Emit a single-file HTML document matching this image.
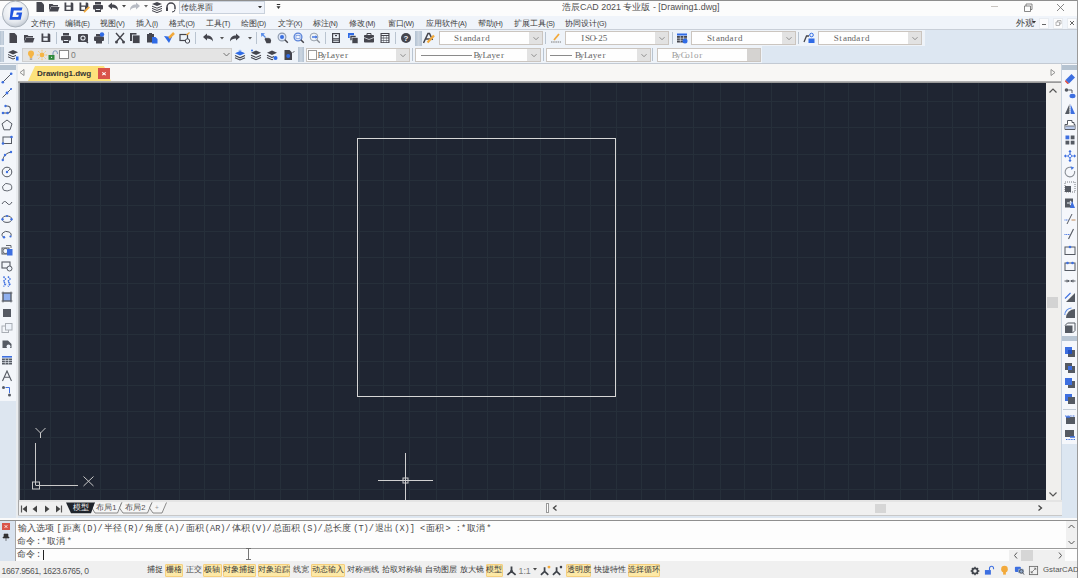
<!DOCTYPE html><html><head><meta charset="utf-8"><style>
*{margin:0;padding:0;box-sizing:border-box}
html,body{width:1078px;height:578px;overflow:hidden;background:#fbfbfb;font-family:"Liberation Sans",sans-serif;position:relative}
.m{font-family:"Liberation Mono",monospace}
.c{display:inline-block;text-align:center;overflow:hidden}
</style></head><body><div style="position:absolute;left:0px;top:0px;width:1078px;height:16px;background:#fcfcfc"></div>
<div style="position:absolute;left:0px;top:0px;width:1078px;height:1px;background:#8e8e8e"></div>
<div style="position:absolute;left:1077px;top:0px;width:1px;height:578px;background:#9a9a9a"></div>
<svg style="position:absolute;left:33.8px;top:0.5px" width="12" height="12" viewBox="0 0 12 12"><path d="M2.5 1 H7.5 L10 3.5 V11 H2.5 Z" fill="#44454d"/></svg>
<svg style="position:absolute;left:48.4px;top:0.5px" width="12" height="12" viewBox="0 0 12 12"><path d="M1 3 H4.5 L5.5 4 H10 V5.5 H3 L1 10 Z" fill="#44454d"/><path d="M3 6 H11.5 L10 10.5 H1.2 Z" fill="#44454d"/></svg>
<svg style="position:absolute;left:63.0px;top:0.5px" width="12" height="12" viewBox="0 0 12 12"><path fill-rule="evenodd" d="M1.5 1.4 H3.3 V4.6 H7.7 V1.4 H9.3 L10.3 2.4 V10 H1.5 Z M3.3 5.8 H7.7 V8.8 H3.3 Z" fill="#44454d"/></svg>
<svg style="position:absolute;left:77.6px;top:0.5px" width="12" height="12" viewBox="0 0 12 12"><path fill-rule="evenodd" d="M1.5 1.4 H3.3 V4.6 H7.7 V1.4 H9.3 L10.3 2.4 V6 L6.5 10 H1.5 Z M3.3 5.8 H7 V8.8 H3.3 Z" fill="#44454d"/><path d="M6 11.2 L11.3 5.8" stroke="#f2a93b" stroke-width="1.8"/></svg>
<svg style="position:absolute;left:92.2px;top:0.5px" width="12" height="12" viewBox="0 0 12 12"><rect x="3" y="1" width="6" height="2.5" fill="#44454d"/><rect x="1" y="4" width="10" height="4.5" rx="1" fill="#44454d"/><rect x="3" y="7.5" width="6" height="3.5" fill="#44454d"/><rect x="3.8" y="8" width="4.4" height="1" fill="#eef3f9"/></svg>
<svg style="position:absolute;left:106.8px;top:0.5px" width="12" height="12" viewBox="0 0 12 12"><path d="M1 5 L5 1.5 V3.6 C8.5 3.6 11 5.5 11 9.5 C9.6 7.3 7.8 6.6 5 6.6 V8.6 Z" fill="#44454d"/></svg>
<svg style="position:absolute;left:122px;top:5.1px" width="4" height="2.5" viewBox="0 0 4 2.5"><path d="M0 0 H4 L2 2.5 Z" fill="#444"/></svg>
<svg style="position:absolute;left:129.0px;top:0.5px" width="12" height="12" viewBox="0 0 12 12"><path d="M11 5 L7 1.5 V3.6 C3.5 3.6 1 5.5 1 9.5 C2.4 7.3 4.2 6.6 7 6.6 V8.6 Z" fill="#b8bcc4"/></svg>
<svg style="position:absolute;left:144.2px;top:5.1px" width="4" height="2.5" viewBox="0 0 4 2.5"><path d="M0 0 H4 L2 2.5 Z" fill="#666"/></svg>
<svg style="position:absolute;left:150.6px;top:0.5px" width="12" height="12" viewBox="0 0 12 12"><path d="M6 1 L11 3 L6 5 L1 3 Z" fill="#44454d"/><path d="M1 5.2 L6 7.2 L11 5.2 M1 7.4 L6 9.4 L11 7.4 M1 9.6 L6 11.6 L11 9.6" fill="none" stroke="#44454d" stroke-width="1"/></svg>
<svg style="position:absolute;left:165.3px;top:0.5px" width="12" height="12" viewBox="0 0 12 12"><path d="M2 8 V6 A4 4 0 0 1 10 6 V8" fill="none" stroke="#44454d" stroke-width="1.5"/><rect x="1" y="6.5" width="2" height="3.5" fill="#44454d"/><path d="M10 8.5 Q10 11 7 11" fill="none" stroke="#44454d" stroke-width="1"/></svg>
<div style="position:absolute;left:179px;top:1px;width:86px;height:13px;background:#eff3fa;border:1px solid #c9d1dc"></div>
<div style="position:absolute;left:181px;top:1px;white-space:nowrap;font-size:7.8px;line-height:13px;color:#3c3c3c">传统界面</div>
<svg style="position:absolute;left:258.2px;top:5.6px" width="4" height="2.5" viewBox="0 0 4 2.5"><path d="M0 0 H4 L2 2.5 Z" fill="#333"/></svg>
<svg style="position:absolute;left:275.5px;top:4px" width="5" height="6" viewBox="0 0 5 6"><rect x="0.8" y="0" width="3.4" height="1" fill="#333"/><path d="M0.5 2.2 H4.5 L2.5 5 Z" fill="#333"/></svg>
<div style="position:absolute;left:562px;top:1px;white-space:nowrap;font-size:8.9px;line-height:13px;color:#505050">浩辰CAD 2021 专业版 - [Drawing1.dwg]</div>
<div style="position:absolute;left:991px;top:6px;width:7px;height:1px;background:#c8c4c0"></div>
<svg style="position:absolute;left:1023px;top:3px" width="10" height="9" viewBox="0 0 10 9"><path d="M1.5 3 H7.5 V8.5 H1.5 Z M3 3 V1 H9 V6.5 H7.5" fill="none" stroke="#6a6a6a" stroke-width="0.8"/></svg>
<svg style="position:absolute;left:1056px;top:3px" width="9" height="9" viewBox="0 0 9 9"><path d="M1 1 L8 8 M8 1 L1 8" stroke="#6a6a6a" stroke-width="0.8"/></svg>
<div style="position:absolute;left:0px;top:16px;width:1077px;height:13px;background:#f0f4fa"></div>
<div style="position:absolute;left:0px;top:29px;width:1077px;height:1px;background:#c9cfd8"></div>
<div style="position:absolute;left:0px;top:30px;width:1077px;height:34px;background:#dde7f2"></div>
<div style="position:absolute;left:0px;top:30px;width:925px;height:16px;background:#eef3f9"></div>
<div style="position:absolute;left:0px;top:46px;width:762px;height:17px;background:#eef3f9"></div>
<div style="position:absolute;left:0px;top:63px;width:1077px;height:1px;background:#c3cad3"></div>
<div style="position:absolute;left:30.8px;top:17px;white-space:nowrap;font-size:8.3px;line-height:12px;color:#3a3a3a">文件<span style="font-size:7px;letter-spacing:-0.3px">(F)</span></div>
<div style="position:absolute;left:65px;top:17px;white-space:nowrap;font-size:8.3px;line-height:12px;color:#3a3a3a">编辑<span style="font-size:7px;letter-spacing:-0.3px">(E)</span></div>
<div style="position:absolute;left:100.1px;top:17px;white-space:nowrap;font-size:8.3px;line-height:12px;color:#3a3a3a">视图<span style="font-size:7px;letter-spacing:-0.3px">(V)</span></div>
<div style="position:absolute;left:136px;top:17px;white-space:nowrap;font-size:8.3px;line-height:12px;color:#3a3a3a">插入<span style="font-size:7px;letter-spacing:-0.3px">(I)</span></div>
<div style="position:absolute;left:169.4px;top:17px;white-space:nowrap;font-size:8.3px;line-height:12px;color:#3a3a3a">格式<span style="font-size:7px;letter-spacing:-0.3px">(O)</span></div>
<div style="position:absolute;left:205.9px;top:17px;white-space:nowrap;font-size:8.3px;line-height:12px;color:#3a3a3a">工具<span style="font-size:7px;letter-spacing:-0.3px">(T)</span></div>
<div style="position:absolute;left:240.9px;top:17px;white-space:nowrap;font-size:8.3px;line-height:12px;color:#3a3a3a">绘图<span style="font-size:7px;letter-spacing:-0.3px">(D)</span></div>
<div style="position:absolute;left:277.6px;top:17px;white-space:nowrap;font-size:8.3px;line-height:12px;color:#3a3a3a">文字<span style="font-size:7px;letter-spacing:-0.3px">(X)</span></div>
<div style="position:absolute;left:312.7px;top:17px;white-space:nowrap;font-size:8.3px;line-height:12px;color:#3a3a3a">标注<span style="font-size:7px;letter-spacing:-0.3px">(N)</span></div>
<div style="position:absolute;left:349.4px;top:17px;white-space:nowrap;font-size:8.3px;line-height:12px;color:#3a3a3a">修改<span style="font-size:7px;letter-spacing:-0.3px">(M)</span></div>
<div style="position:absolute;left:387.5px;top:17px;white-space:nowrap;font-size:8.3px;line-height:12px;color:#3a3a3a">窗口<span style="font-size:7px;letter-spacing:-0.3px">(W)</span></div>
<div style="position:absolute;left:426px;top:17px;white-space:nowrap;font-size:8.3px;line-height:12px;color:#3a3a3a">应用软件<span style="font-size:7px;letter-spacing:-0.3px">(A)</span></div>
<div style="position:absolute;left:477.7px;top:17px;white-space:nowrap;font-size:8.3px;line-height:12px;color:#3a3a3a">帮助<span style="font-size:7px;letter-spacing:-0.3px">(H)</span></div>
<div style="position:absolute;left:514.2px;top:17px;white-space:nowrap;font-size:8.3px;line-height:12px;color:#3a3a3a">扩展工具<span style="font-size:7px;letter-spacing:-0.3px">(S)</span></div>
<div style="position:absolute;left:565.1px;top:17px;white-space:nowrap;font-size:8.3px;line-height:12px;color:#3a3a3a">协同设计<span style="font-size:7px;letter-spacing:-0.3px">(G)</span></div>
<div style="position:absolute;left:1016px;top:17px;white-space:nowrap;font-size:8.5px;line-height:12px;color:#444">外观</div>
<svg style="position:absolute;left:1032px;top:21.3px" width="4" height="2.5" viewBox="0 0 4 2.5"><path d="M0 0 H4 L2 2.5 Z" fill="#333"/></svg>
<div style="position:absolute;left:1039px;top:18px;width:10px;height:11px;background:#fcfcfd;border:1px solid #e8ecf1"></div>
<div style="position:absolute;left:1042px;top:24px;width:4px;height:1px;background:#666"></div>
<div style="position:absolute;left:1053px;top:18px;width:10px;height:11px;background:#fcfcfd;border:1px solid #e8ecf1"></div>
<svg style="position:absolute;left:1054px;top:19px" width="8" height="8" viewBox="0 0 8 8"><path d="M2 3 H5.5 V6.5 H2 Z M3.5 3 V1.5 H7 V5 H5.5" fill="none" stroke="#999" stroke-width="0.7"/></svg>
<div style="position:absolute;left:1067px;top:18px;width:10px;height:11px;background:#fcfcfd;border:1px solid #e8ecf1"></div>
<svg style="position:absolute;left:1068px;top:19px" width="8" height="8" viewBox="0 0 8 8"><path d="M2 2 L6 6 M6 2 L2 6" stroke="#555" stroke-width="0.9"/></svg>
<svg style="position:absolute;left:1px;top:0px" width="30" height="30" viewBox="0 0 30 30"><defs><radialGradient id="lg" cx="45%" cy="35%" r="65%"><stop offset="0" stop-color="#ffffff"/><stop offset="0.7" stop-color="#e6eaef"/><stop offset="1" stop-color="#c3cad3"/></radialGradient></defs><circle cx="14.5" cy="14" r="13" fill="url(#lg)" stroke="#aab2bb" stroke-width="1"/><path d="M10 7.5 H21.5 L20.6 10.5 H12.8 L11.3 17 H17.2 L17.8 14.8 H15.2 L15.8 12.6 H21.2 L19.6 19.8 H8.6 Z" fill="#1f55e0"/></svg>
<div style="position:absolute;left:0px;top:31px;width:4px;height:14px;background:linear-gradient(90deg,#b3c2d2,#ccd6e1 50%,#b3c2d2)"></div>
<svg style="position:absolute;left:7.0px;top:32.4px" width="12" height="12" viewBox="0 0 12 12"><path d="M2.5 1 H7.5 L10 3.5 V11 H2.5 Z" fill="#44454d"/></svg>
<svg style="position:absolute;left:23.2px;top:32.4px" width="12" height="12" viewBox="0 0 12 12"><path d="M1 3 H4.5 L5.5 4 H10 V5.5 H3 L1 10 Z" fill="#44454d"/><path d="M3 6 H11.5 L10 10.5 H1.2 Z" fill="#44454d"/></svg>
<svg style="position:absolute;left:39.5px;top:32.4px" width="12" height="12" viewBox="0 0 12 12"><path fill-rule="evenodd" d="M1.5 1.4 H3.3 V4.6 H7.7 V1.4 H9.3 L10.3 2.4 V10 H1.5 Z M3.3 5.8 H7.7 V8.8 H3.3 Z" fill="#44454d"/></svg>
<div style="position:absolute;left:55.5px;top:32px;width:1px;height:12px;background:#b9c4d0"></div>
<svg style="position:absolute;left:60.2px;top:32.4px" width="12" height="12" viewBox="0 0 12 12"><rect x="3" y="1" width="6" height="2.5" fill="#44454d"/><rect x="1" y="4" width="10" height="4.5" rx="1" fill="#44454d"/><rect x="3" y="7.5" width="6" height="3.5" fill="#44454d"/><rect x="3.8" y="8" width="4.4" height="1" fill="#eef3f9"/></svg>
<svg style="position:absolute;left:76.5px;top:32.4px" width="12" height="12" viewBox="0 0 12 12"><rect x="1" y="2" width="10" height="8" rx="1" fill="#44454d"/><circle cx="6" cy="6" r="2.6" fill="#eef3f9"/><circle cx="6" cy="6" r="1.6" fill="#44454d"/><path d="M8 8 L11 11" stroke="#44454d" stroke-width="1.3"/></svg>
<svg style="position:absolute;left:92.7px;top:32.4px" width="12" height="12" viewBox="0 0 12 12"><rect x="3" y="2" width="6" height="2.5" fill="#44454d"/><rect x="1" y="4.5" width="10" height="4.5" rx="1" fill="#44454d"/><rect x="3" y="8.5" width="6" height="3" fill="#44454d"/><circle cx="9" cy="2.5" r="2.2" fill="#2f6be6"/></svg>
<div style="position:absolute;left:108.4px;top:32px;width:1px;height:12px;background:#b9c4d0"></div>
<svg style="position:absolute;left:113.5px;top:32.4px" width="12" height="12" viewBox="0 0 12 12"><path d="M2 1 L9 9 M10 1 L3 9" stroke="#44454d" stroke-width="1.4"/><circle cx="2.5" cy="10" r="1.5" fill="#44454d"/><circle cx="9.5" cy="10" r="1.5" fill="#44454d"/></svg>
<svg style="position:absolute;left:129.2px;top:32.4px" width="12" height="12" viewBox="0 0 12 12"><rect x="1" y="1" width="6.5" height="8" fill="#44454d"/><rect x="3.5" y="3" width="7.5" height="8.5" fill="#44454d" stroke="#eef3f9" stroke-width="0.8"/></svg>
<svg style="position:absolute;left:146.3px;top:32.4px" width="12" height="12" viewBox="0 0 12 12"><rect x="1" y="2" width="7" height="8.5" fill="#44454d"/><rect x="3" y="1" width="3" height="2" fill="#44454d"/><path d="M6 5 H9.5 L11.5 7 V11.5 H6 Z" fill="#2f6be6"/></svg>
<svg style="position:absolute;left:162.5px;top:32.4px" width="12" height="12" viewBox="0 0 12 12"><path d="M1 4 L6 11 L9 5 Z" fill="#2f6be6"/><path d="M6 6 L11 1" stroke="#f2a93b" stroke-width="2.5"/></svg>
<svg style="position:absolute;left:178.7px;top:32.4px" width="12" height="12" viewBox="0 0 12 12"><rect x="1" y="2.5" width="7.5" height="6" fill="none" stroke="#44454d" stroke-width="1.2"/><circle cx="8.5" cy="9" r="2.2" fill="#eef3f9" stroke="#44454d" stroke-width="1"/><path d="M7.5 3 L10.5 0.5" stroke="#f2a93b" stroke-width="1.2"/></svg>
<div style="position:absolute;left:194.5px;top:32px;width:1px;height:12px;background:#b9c4d0"></div>
<svg style="position:absolute;left:201.5px;top:32.4px" width="12" height="12" viewBox="0 0 12 12"><path d="M1 5 L5 1.5 V3.6 C8.5 3.6 11 5.5 11 9.5 C9.6 7.3 7.8 6.6 5 6.6 V8.6 Z" fill="#44454d"/></svg>
<svg style="position:absolute;left:219.8px;top:37.3px" width="4" height="2.5" viewBox="0 0 4 2.5"><path d="M0 0 H4 L2 2.5 Z" fill="#555"/></svg>
<svg style="position:absolute;left:228.7px;top:32.4px" width="12" height="12" viewBox="0 0 12 12"><path d="M11 5 L7 1.5 V3.6 C3.5 3.6 1 5.5 1 9.5 C2.4 7.3 4.2 6.6 7 6.6 V8.6 Z" fill="#44454d"/></svg>
<svg style="position:absolute;left:247.7px;top:37.3px" width="4" height="2.5" viewBox="0 0 4 2.5"><path d="M0 0 H4 L2 2.5 Z" fill="#555"/></svg>
<div style="position:absolute;left:255.5px;top:32px;width:1px;height:12px;background:#b9c4d0"></div>
<svg style="position:absolute;left:260.2px;top:32.4px" width="12" height="12" viewBox="0 0 12 12"><path d="M1 1 L5 1.3 L1.3 5 Z" fill="#5a8de8"/><path d="M2 2 L5.5 5.5" stroke="#5a8de8" stroke-width="1.3"/><path d="M4.5 7 L6 5.5 L7 6.5 L8 5.5 L9 6.5 L10 6 L11.2 8.5 L10.5 11.2 H6.5 Z" fill="#44454d"/></svg>
<svg style="position:absolute;left:276.5px;top:32.4px" width="12" height="12" viewBox="0 0 12 12"><circle cx="5" cy="5" r="3.9" fill="#dde7fa" stroke="#8d99ab" stroke-width="1.1"/><circle cx="5" cy="5" r="2" fill="#3a6fe0"/><path d="M7.8 7.8 L10.8 10.8" stroke="#44454d" stroke-width="1.4"/></svg>
<svg style="position:absolute;left:292.7px;top:32.4px" width="12" height="12" viewBox="0 0 12 12"><circle cx="5" cy="5" r="3.9" fill="#dde7fa" stroke="#5b84d8" stroke-width="1.3"/><rect x="3" y="3.6" width="4" height="2.8" fill="#f2f5fb" stroke="#5b84d8" stroke-width="0.6"/><path d="M7.8 7.8 L10.8 10.8" stroke="#44454d" stroke-width="1.5"/></svg>
<svg style="position:absolute;left:309.0px;top:32.4px" width="12" height="12" viewBox="0 0 12 12"><circle cx="5" cy="5" r="3.9" fill="#eef3f9" stroke="#9aa3ae" stroke-width="1"/><path d="M3 5 H7.5" stroke="#3a6fe0" stroke-width="1.4"/><path d="M6.5 3.3 L8.5 5 L6.5 6.7 Z" fill="#3a6fe0"/><path d="M7.8 7.8 L10.8 10.8" stroke="#8a8f96" stroke-width="1.3"/></svg>
<div style="position:absolute;left:325.3px;top:32px;width:1px;height:12px;background:#b9c4d0"></div>
<svg style="position:absolute;left:329.7px;top:32.4px" width="12" height="12" viewBox="0 0 12 12"><rect x="2" y="1" width="8" height="10" fill="#44454d"/><rect x="3.2" y="2.2" width="5.6" height="4" fill="#eef3f9"/><rect x="5" y="3" width="2" height="1.2" fill="#44454d"/><rect x="3.2" y="7.5" width="5.6" height="0.8" fill="#eef3f9"/><rect x="3.2" y="9.2" width="5.6" height="0.8" fill="#eef3f9"/></svg>
<svg style="position:absolute;left:346.6px;top:32.4px" width="12" height="12" viewBox="0 0 12 12"><rect x="1" y="1" width="6" height="5" fill="#2f6be6"/><rect x="3" y="3.5" width="6" height="5" fill="#44454d" stroke="#eef3f9" stroke-width="0.6"/><rect x="5" y="5.5" width="6" height="6" fill="#44454d" stroke="#eef3f9" stroke-width="0.6"/></svg>
<svg style="position:absolute;left:362.8px;top:32.4px" width="12" height="12" viewBox="0 0 12 12"><path d="M4 3 V1.5 H8 V3" fill="none" stroke="#44454d" stroke-width="1"/><rect x="1" y="3" width="10" height="7.5" rx="0.8" fill="#44454d"/><path d="M1 5.5 L6 7.5 L11 5.5" fill="none" stroke="#eef3f9" stroke-width="0.7"/></svg>
<svg style="position:absolute;left:378.8px;top:32.4px" width="12" height="12" viewBox="0 0 12 12"><rect x="1.5" y="1" width="9" height="10" fill="#44454d"/><rect x="2.6" y="4" width="2" height="1.6" fill="#eef3f9"/><rect x="5" y="4" width="2" height="1.6" fill="#eef3f9"/><rect x="7.4" y="4" width="2" height="1.6" fill="#eef3f9"/><rect x="2.6" y="6.4" width="2" height="1.6" fill="#eef3f9"/><rect x="5" y="6.4" width="2" height="1.6" fill="#eef3f9"/><rect x="7.4" y="6.4" width="2" height="1.6" fill="#eef3f9"/><rect x="2.6" y="8.6" width="2" height="1.6" fill="#eef3f9"/><rect x="5" y="8.6" width="2" height="1.6" fill="#eef3f9"/><rect x="7.4" y="8.6" width="2" height="1.6" fill="#eef3f9"/><rect x="2.6" y="2" width="6.8" height="1" fill="#eef3f9"/></svg>
<div style="position:absolute;left:394.5px;top:32px;width:1px;height:12px;background:#b9c4d0"></div>
<svg style="position:absolute;left:399.5px;top:32.4px" width="12" height="12" viewBox="0 0 12 12"><circle cx="6" cy="6" r="5" fill="#44454d"/><text x="6" y="9" font-size="8" font-weight="bold" text-anchor="middle" fill="#eef3f9" font-family="Liberation Sans">?</text></svg>
<div style="position:absolute;left:415px;top:30.5px;width:6.5px;height:15px;background:linear-gradient(90deg,#b3c2d2,#ccd6e1 50%,#b3c2d2)"></div>
<svg style="position:absolute;left:422.9px;top:32.4px" width="12" height="12" viewBox="0 0 12 12"><path d="M0.5 11 L5 1.5 H6.5 L9.5 8 M2.5 7 H7" fill="none" stroke="#44454d" stroke-width="1.5"/><path d="M4.5 10.5 L11 3.5" stroke="#f2a93b" stroke-width="2.2"/></svg>
<div style="position:absolute;left:438.6px;top:31px;width:104.39999999999998px;height:14px;background:#fefefe;border:1px solid #cbc5bf"></div>
<div style="position:absolute;left:529px;top:32px;width:13px;height:12px;background:#e2e2e2"></div>
<svg style="position:absolute;left:532px;top:36.0px" width="8" height="5" viewBox="0 0 8 5"><path d="M1.5 1.2 L4 3.7 L6.5 1.2" fill="none" stroke="#777" stroke-width="0.8"/></svg>
<div style="position:absolute;left:454px;top:31.2px;white-space:nowrap;font-family:'Liberation Serif',serif;font-size:9px;line-height:14px;color:#656565"><span style="display:inline-block;width:4.46px;text-align:center">S</span><span style="display:inline-block;width:4.46px;text-align:center">t</span><span style="display:inline-block;width:4.46px;text-align:center">a</span><span style="display:inline-block;width:4.46px;text-align:center">n</span><span style="display:inline-block;width:4.46px;text-align:center">d</span><span style="display:inline-block;width:4.46px;text-align:center">a</span><span style="display:inline-block;width:4.46px;text-align:center">r</span><span style="display:inline-block;width:4.46px;text-align:center">d</span></div>
<div style="position:absolute;left:544.5px;top:32px;width:1px;height:12px;background:#b9c4d0"></div>
<svg style="position:absolute;left:549.8px;top:32.4px" width="12" height="12" viewBox="0 0 12 12"><path d="M4 8 L9 2" stroke="#f2a93b" stroke-width="1.8"/><path d="M1 10 H11" stroke="#7a7a7a" stroke-width="1" stroke-dasharray="1.5 0.7"/></svg>
<div style="position:absolute;left:565px;top:31px;width:104.20000000000005px;height:14px;background:#fefefe;border:1px solid #cbc5bf"></div>
<div style="position:absolute;left:655.2px;top:32px;width:13px;height:12px;background:#e2e2e2"></div>
<svg style="position:absolute;left:658.2px;top:36.0px" width="8" height="5" viewBox="0 0 8 5"><path d="M1.5 1.2 L4 3.7 L6.5 1.2" fill="none" stroke="#777" stroke-width="0.8"/></svg>
<div style="position:absolute;left:580.5px;top:31.2px;white-space:nowrap;font-family:'Liberation Serif',serif;font-size:9px;line-height:14px;color:#656565"><span style="display:inline-block;width:4.46px;text-align:center">I</span><span style="display:inline-block;width:4.46px;text-align:center">S</span><span style="display:inline-block;width:4.46px;text-align:center">O</span><span style="display:inline-block;width:4.46px;text-align:center">-</span><span style="display:inline-block;width:4.46px;text-align:center">2</span><span style="display:inline-block;width:4.46px;text-align:center">5</span></div>
<div style="position:absolute;left:671.8px;top:32px;width:1px;height:12px;background:#b9c4d0"></div>
<svg style="position:absolute;left:676.2px;top:32.4px" width="12" height="12" viewBox="0 0 12 12"><rect x="1" y="1.5" width="10" height="2" fill="#2f6be6"/><rect x="1" y="4" width="10" height="6.5" fill="#44454d"/><path d="M1 6.2 H11 M1 8.3 H11 M4.3 4 V10.5 M7.6 4 V10.5" stroke="#eef3f9" stroke-width="0.6"/><circle cx="9" cy="9" r="2.5" fill="#2f6be6"/></svg>
<div style="position:absolute;left:691.3px;top:31px;width:104.70000000000005px;height:14px;background:#fefefe;border:1px solid #cbc5bf"></div>
<div style="position:absolute;left:782px;top:32px;width:13px;height:12px;background:#e2e2e2"></div>
<svg style="position:absolute;left:785px;top:36.0px" width="8" height="5" viewBox="0 0 8 5"><path d="M1.5 1.2 L4 3.7 L6.5 1.2" fill="none" stroke="#777" stroke-width="0.8"/></svg>
<div style="position:absolute;left:706.9px;top:31.2px;white-space:nowrap;font-family:'Liberation Serif',serif;font-size:9px;line-height:14px;color:#656565"><span style="display:inline-block;width:4.46px;text-align:center">S</span><span style="display:inline-block;width:4.46px;text-align:center">t</span><span style="display:inline-block;width:4.46px;text-align:center">a</span><span style="display:inline-block;width:4.46px;text-align:center">n</span><span style="display:inline-block;width:4.46px;text-align:center">d</span><span style="display:inline-block;width:4.46px;text-align:center">a</span><span style="display:inline-block;width:4.46px;text-align:center">r</span><span style="display:inline-block;width:4.46px;text-align:center">d</span></div>
<div style="position:absolute;left:797.9px;top:32px;width:1px;height:12px;background:#b9c4d0"></div>
<svg style="position:absolute;left:802.6px;top:32.4px" width="12" height="12" viewBox="0 0 12 12"><path d="M1 10 L3.5 4 H6" fill="none" stroke="#44454d" stroke-width="1.3"/><circle cx="8.5" cy="3" r="1.8" fill="none" stroke="#2f6be6" stroke-width="1"/><rect x="5.5" y="6.5" width="6" height="4.5" fill="#2f6be6"/></svg>
<div style="position:absolute;left:817.8px;top:31px;width:103.80000000000007px;height:14px;background:#fefefe;border:1px solid #cbc5bf"></div>
<div style="position:absolute;left:907.6px;top:32px;width:13px;height:12px;background:#e2e2e2"></div>
<svg style="position:absolute;left:910.6px;top:36.0px" width="8" height="5" viewBox="0 0 8 5"><path d="M1.5 1.2 L4 3.7 L6.5 1.2" fill="none" stroke="#777" stroke-width="0.8"/></svg>
<div style="position:absolute;left:833.8px;top:31.2px;white-space:nowrap;font-family:'Liberation Serif',serif;font-size:9px;line-height:14px;color:#656565"><span style="display:inline-block;width:4.46px;text-align:center">S</span><span style="display:inline-block;width:4.46px;text-align:center">t</span><span style="display:inline-block;width:4.46px;text-align:center">a</span><span style="display:inline-block;width:4.46px;text-align:center">n</span><span style="display:inline-block;width:4.46px;text-align:center">d</span><span style="display:inline-block;width:4.46px;text-align:center">a</span><span style="display:inline-block;width:4.46px;text-align:center">r</span><span style="display:inline-block;width:4.46px;text-align:center">d</span></div>
<div style="position:absolute;left:0px;top:47px;width:4px;height:15px;background:linear-gradient(90deg,#b3c2d2,#ccd6e1 50%,#b3c2d2)"></div>
<svg style="position:absolute;left:7.0px;top:48.8px" width="12" height="12" viewBox="0 0 12 12"><path d="M6 1 L11 3.2 L6 5.4 L1 3.2 Z" fill="#44454d"/><path d="M1 5.5 L6 7.7 L9 6.4 M1 7.8 L6 10 L8 9.2" fill="none" stroke="#44454d" stroke-width="1"/><rect x="9" y="7.5" width="2.5" height="4" fill="#2f6be6"/></svg>
<div style="position:absolute;left:22px;top:48px;width:210px;height:14px;background:#e4e4e4;border:1px solid #cfcfcf"></div>
<svg style="position:absolute;left:222px;top:52px" width="9" height="5" viewBox="0 0 9 5"><path d="M1.5 1 L4.5 4 L7.5 1" fill="none" stroke="#666" stroke-width="0.9"/></svg>
<svg style="position:absolute;left:24.5px;top:48.8px" width="12" height="12" viewBox="0 0 12 12"><circle cx="6" cy="4.6" r="3" fill="#f5b545"/><path d="M4.3 6.5 H7.7 L7.2 9 H4.8 Z" fill="#f5b545"/><rect x="4.8" y="9.3" width="2.4" height="1.6" fill="#a9a39a"/></svg>
<svg style="position:absolute;left:35.5px;top:48.8px" width="12" height="12" viewBox="0 0 12 12"><circle cx="6" cy="6" r="2.4" fill="#f5b545"/><path d="M6 0.8 V2.6 M6 9.4 V11.2 M0.8 6 H2.6 M9.4 6 H11.2 M2.3 2.3 L3.5 3.5 M8.5 8.5 L9.7 9.7 M9.7 2.3 L8.5 3.5 M3.5 8.5 L2.3 9.7" stroke="#f5c060" stroke-width="0.9"/></svg>
<svg style="position:absolute;left:46.6px;top:48.8px" width="12" height="12" viewBox="0 0 12 12"><rect x="1.5" y="6" width="6" height="4.8" fill="#2f8a3c"/><path d="M6 6 V4 A2.2 2.2 0 0 1 10.4 4 V5" fill="none" stroke="#7d9bbf" stroke-width="1"/><rect x="4" y="7.8" width="1.1" height="1.1" fill="#eee"/></svg>
<div style="position:absolute;left:59px;top:50px;width:10px;height:9px;background:#fff;border:1px solid #8a8a8a"></div>
<div style="position:absolute;left:71px;top:48px;white-space:nowrap;font-size:8.5px;line-height:14px;color:#7a7a7a">0</div>
<svg style="position:absolute;left:234.3px;top:48.8px" width="12" height="12" viewBox="0 0 12 12"><path d="M6 2 L11 4.2 L6 6.4 L1 4.2 Z" fill="#2f6be6"/><path d="M6 0.5 L8 2 H4 Z" fill="#9cc0f5"/><path d="M1 6.6 L6 8.8 L11 6.6 M1 8.8 L6 11 L11 8.8" fill="none" stroke="#44454d" stroke-width="1.1"/></svg>
<svg style="position:absolute;left:249.8px;top:48.8px" width="12" height="12" viewBox="0 0 12 12"><path d="M6 1.5 L11 3.7 L6 5.9 L1 3.7 Z" fill="#44454d"/><path d="M1 6.2 L6 8.4 L11 6.2 M1 8.5 L6 10.7 L11 8.5" fill="none" stroke="#44454d" stroke-width="1.1"/><circle cx="2" cy="1.5" r="1" fill="#2f6be6"/></svg>
<svg style="position:absolute;left:266.0px;top:48.8px" width="12" height="12" viewBox="0 0 12 12"><path d="M6 1.5 L11 3.7 L6 5.9 L1 3.7 Z" fill="#44454d"/><path d="M1 6.2 L6 8.4 L8 7.5 M1 8.5 L6 10.7 L7 10.2" fill="none" stroke="#44454d" stroke-width="1.1"/><circle cx="9.5" cy="9" r="2" fill="#2f6be6"/></svg>
<svg style="position:absolute;left:283.0px;top:48.8px" width="12" height="12" viewBox="0 0 12 12"><path d="M1.5 1 H6.5 L9 3.5 V11 H1.5 Z" fill="#44454d"/><circle cx="5.2" cy="7" r="2" fill="#2f6be6"/><path d="M9.5 4 L11.5 2" stroke="#44454d" stroke-width="0.8"/></svg>
<div style="position:absolute;left:298px;top:47px;width:6px;height:15px;background:linear-gradient(90deg,#b3c2d2,#ccd6e1 50%,#b3c2d2)"></div>
<div style="position:absolute;left:305.8px;top:48px;width:104.19999999999999px;height:14px;background:#fefefe;border:1px solid #cbc5bf"></div>
<div style="position:absolute;left:396px;top:49px;width:13px;height:12px;background:#e2e2e2"></div>
<svg style="position:absolute;left:399px;top:53.0px" width="8" height="5" viewBox="0 0 8 5"><path d="M1.5 1.2 L4 3.7 L6.5 1.2" fill="none" stroke="#777" stroke-width="0.8"/></svg>
<div style="position:absolute;left:307.8px;top:50px;width:9px;height:10px;background:#fff;border:1px solid #9a9a9a"></div>
<div style="position:absolute;left:317.5px;top:48.2px;white-space:nowrap;font-family:'Liberation Serif',serif;font-size:9px;line-height:14px;color:#656565"><span style="display:inline-block;width:4.46px;text-align:center">B</span><span style="display:inline-block;width:4.46px;text-align:center">y</span><span style="display:inline-block;width:4.46px;text-align:center">L</span><span style="display:inline-block;width:4.46px;text-align:center">a</span><span style="display:inline-block;width:4.46px;text-align:center">y</span><span style="display:inline-block;width:4.46px;text-align:center">e</span><span style="display:inline-block;width:4.46px;text-align:center">r</span></div>
<div style="position:absolute;left:411.6px;top:48px;width:1px;height:13px;background:#b9c4d0"></div>
<div style="position:absolute;left:415px;top:48px;width:126px;height:14px;background:#fefefe;border:1px solid #cbc5bf"></div>
<div style="position:absolute;left:527px;top:49px;width:13px;height:12px;background:#e2e2e2"></div>
<svg style="position:absolute;left:530px;top:53.0px" width="8" height="5" viewBox="0 0 8 5"><path d="M1.5 1.2 L4 3.7 L6.5 1.2" fill="none" stroke="#777" stroke-width="0.8"/></svg>
<div style="position:absolute;left:421px;top:54.5px;width:51px;height:1px;background:#8a8a8a"></div>
<div style="position:absolute;left:473.6px;top:48.2px;white-space:nowrap;font-family:'Liberation Serif',serif;font-size:9px;line-height:14px;color:#656565"><span style="display:inline-block;width:4.46px;text-align:center">B</span><span style="display:inline-block;width:4.46px;text-align:center">y</span><span style="display:inline-block;width:4.46px;text-align:center">L</span><span style="display:inline-block;width:4.46px;text-align:center">a</span><span style="display:inline-block;width:4.46px;text-align:center">y</span><span style="display:inline-block;width:4.46px;text-align:center">e</span><span style="display:inline-block;width:4.46px;text-align:center">r</span></div>
<div style="position:absolute;left:542.5px;top:48px;width:1px;height:13px;background:#b9c4d0"></div>
<div style="position:absolute;left:546.4px;top:48px;width:104.20000000000005px;height:14px;background:#fefefe;border:1px solid #cbc5bf"></div>
<div style="position:absolute;left:636.6px;top:49px;width:13px;height:12px;background:#e2e2e2"></div>
<svg style="position:absolute;left:639.6px;top:53.0px" width="8" height="5" viewBox="0 0 8 5"><path d="M1.5 1.2 L4 3.7 L6.5 1.2" fill="none" stroke="#777" stroke-width="0.8"/></svg>
<div style="position:absolute;left:549.6px;top:54.5px;width:22.699999999999932px;height:1px;background:#8a8a8a"></div>
<div style="position:absolute;left:575px;top:48.2px;white-space:nowrap;font-family:'Liberation Serif',serif;font-size:9px;line-height:14px;color:#656565"><span style="display:inline-block;width:4.46px;text-align:center">B</span><span style="display:inline-block;width:4.46px;text-align:center">y</span><span style="display:inline-block;width:4.46px;text-align:center">L</span><span style="display:inline-block;width:4.46px;text-align:center">a</span><span style="display:inline-block;width:4.46px;text-align:center">y</span><span style="display:inline-block;width:4.46px;text-align:center">e</span><span style="display:inline-block;width:4.46px;text-align:center">r</span></div>
<div style="position:absolute;left:652.1px;top:48px;width:1px;height:13px;background:#b9c4d0"></div>
<div style="position:absolute;left:656.8px;top:48px;width:103.80000000000007px;height:14px;background:#fefefe;border:1px solid #cbc5bf"></div>
<div style="position:absolute;left:746.6px;top:49px;width:13px;height:12px;background:#d5d3d1"></div>
<div style="position:absolute;left:671.8px;top:48.2px;white-space:nowrap;font-family:'Liberation Serif',serif;font-size:9px;line-height:14px;color:#9a9a9a"><span style="display:inline-block;width:4.46px;text-align:center">B</span><span style="display:inline-block;width:4.46px;text-align:center">y</span><span style="display:inline-block;width:4.46px;text-align:center">C</span><span style="display:inline-block;width:4.46px;text-align:center">o</span><span style="display:inline-block;width:4.46px;text-align:center">l</span><span style="display:inline-block;width:4.46px;text-align:center">o</span><span style="display:inline-block;width:4.46px;text-align:center">r</span></div>
<div style="position:absolute;left:16px;top:64px;width:1046px;height:18px;background:#f8f7f5"></div>
<div style="position:absolute;left:16px;top:81px;width:1046px;height:2px;background:linear-gradient(#bdbdbd,#8e8e8e)"></div>
<svg style="position:absolute;left:18px;top:68px" width="8" height="9" viewBox="0 0 8 9"><path d="M6 1.5 L2 4.5 L6 7.5 Z" fill="none" stroke="#888" stroke-width="0.9"/></svg>
<svg style="position:absolute;left:28px;top:66px" width="84" height="15" viewBox="0 0 84 15"><path d="M7 0 H76 L83 15 H0 Z" fill="#fde27c"/></svg>
<div style="position:absolute;left:37px;top:66px;white-space:nowrap;font-size:8px;font-weight:bold;line-height:15px;color:#333">Drawing1.dwg</div>
<div style="position:absolute;left:98px;top:67.5px;width:12px;height:11.5px;background:#d9534a"></div>
<svg style="position:absolute;left:98px;top:67.5px" width="12" height="11.5" viewBox="0 0 12 11.5"><path d="M4.3 4.3 L7.7 7.2 M7.7 4.3 L4.3 7.2" stroke="#fff" stroke-width="1.1"/></svg>
<svg style="position:absolute;left:1049px;top:68px" width="8" height="9" viewBox="0 0 8 9"><path d="M2 1.5 L6 4.5 L2 7.5 Z" fill="none" stroke="#888" stroke-width="0.9"/></svg>
<div style="position:absolute;left:0px;top:64px;width:18px;height:454px;background:#dde6f0"></div>
<div style="position:absolute;left:0px;top:64px;width:16px;height:337px;background:#f3f6fa"></div>
<div style="position:absolute;left:16px;top:64px;width:2px;height:454px;background:#e9ecef"></div>
<div style="position:absolute;left:0px;top:65px;width:16px;height:5px;background:#b5c3d1"></div>
<div style="position:absolute;left:18px;top:83px;width:2px;height:418px;background:linear-gradient(90deg,#c4c7ca,#8d9196)"></div>
<svg style="position:absolute;left:1.0px;top:71.6px" width="12" height="12" viewBox="0 0 12 12"><path d="M1.5 10.5 L10.5 1.5" stroke="#555a63" stroke-width="1"/><circle cx="1.8" cy="10.2" r="1.3" fill="#3d6fe0"/><circle cx="10.2" cy="1.8" r="1.3" fill="#3d6fe0"/></svg>
<svg style="position:absolute;left:1.0px;top:87.28px" width="12" height="12" viewBox="0 0 12 12"><path d="M1.5 10.5 L10.5 1.5" stroke="#555a63" stroke-width="1"/><circle cx="6" cy="6" r="1.4" fill="#3d6fe0"/><circle cx="10" cy="2" r="1" fill="#3d6fe0"/></svg>
<svg style="position:absolute;left:1.0px;top:102.96px" width="12" height="12" viewBox="0 0 12 12"><path d="M2 10 H6 A3.5 3.5 0 0 0 6 3 H4" fill="none" stroke="#555a63" stroke-width="1.1"/><circle cx="2" cy="10" r="1.3" fill="#3d6fe0"/><circle cx="6.5" cy="10" r="1.3" fill="#3d6fe0"/><circle cx="4.5" cy="3" r="1.2" fill="#3d6fe0"/></svg>
<svg style="position:absolute;left:1.0px;top:118.63999999999999px" width="12" height="12" viewBox="0 0 12 12"><path d="M6 1 L11 4.8 L9 10.8 H3 L1 4.8 Z" fill="none" stroke="#555a63" stroke-width="1"/></svg>
<svg style="position:absolute;left:1.0px;top:134.32px" width="12" height="12" viewBox="0 0 12 12"><rect x="2" y="3" width="8.5" height="6.5" fill="none" stroke="#555a63" stroke-width="1"/><circle cx="2" cy="9.5" r="1.3" fill="#3d6fe0"/><circle cx="10.5" cy="3" r="1.3" fill="#3d6fe0"/></svg>
<svg style="position:absolute;left:1.0px;top:150.0px" width="12" height="12" viewBox="0 0 12 12"><path d="M1.5 10.5 Q3 3 10.5 2" fill="none" stroke="#555a63" stroke-width="1"/><circle cx="1.8" cy="10" r="1.2" fill="#3d6fe0"/><circle cx="4" cy="5" r="1.2" fill="#3d6fe0"/><circle cx="10" cy="2" r="1.2" fill="#3d6fe0"/></svg>
<svg style="position:absolute;left:1.0px;top:165.68px" width="12" height="12" viewBox="0 0 12 12"><circle cx="6" cy="6" r="4.8" fill="none" stroke="#555a63" stroke-width="1"/><path d="M6 6 L9 3" stroke="#555a63" stroke-width="0.9"/><circle cx="6" cy="6" r="1.2" fill="#3d6fe0"/></svg>
<svg style="position:absolute;left:1.0px;top:181.35999999999999px" width="12" height="12" viewBox="0 0 12 12"><path d="M2 8 Q0.5 5.5 3 4 Q4.5 1.5 7 2.8 Q10.5 2.5 10.8 5.8 Q11.5 9 8.5 9.3 Q6 10.5 4 9.5 Q2.5 9.8 2 8 Z" fill="none" stroke="#555a63" stroke-width="0.9"/></svg>
<svg style="position:absolute;left:1.0px;top:197.04px" width="12" height="12" viewBox="0 0 12 12"><path d="M1 7 Q3.5 2.5 6 6 Q8.5 9.5 11 5" fill="none" stroke="#555a63" stroke-width="1"/></svg>
<svg style="position:absolute;left:1.0px;top:212.72px" width="12" height="12" viewBox="0 0 12 12"><ellipse cx="6" cy="6.2" rx="4.6" ry="3.2" fill="none" stroke="#555a63" stroke-width="1"/><circle cx="1.5" cy="6.2" r="1.2" fill="#3d6fe0"/><circle cx="10.5" cy="6.2" r="1.2" fill="#3d6fe0"/><circle cx="6" cy="3" r="1.1" fill="#3d6fe0"/></svg>
<svg style="position:absolute;left:1.0px;top:228.4px" width="12" height="12" viewBox="0 0 12 12"><path d="M3 9.5 A4.6 3.3 0 1 1 9.5 8.5" fill="none" stroke="#555a63" stroke-width="1"/><circle cx="3" cy="9.3" r="1.2" fill="#3d6fe0"/><circle cx="9.5" cy="8.5" r="1.1" fill="#3d6fe0"/></svg>
<svg style="position:absolute;left:1.0px;top:244.07999999999998px" width="12" height="12" viewBox="0 0 12 12"><rect x="1" y="4" width="7" height="6" fill="none" stroke="#555a63" stroke-width="1"/><circle cx="4.5" cy="7" r="2.6" fill="none" stroke="#555a63" stroke-width="0.9"/><rect x="6" y="5" width="5.5" height="6.5" fill="#3d6fe0"/><path d="M5 1.5 H10 V4" fill="none" stroke="#555a63" stroke-width="0.9"/></svg>
<svg style="position:absolute;left:1.0px;top:259.76px" width="12" height="12" viewBox="0 0 12 12"><rect x="1" y="2" width="8" height="6" fill="none" stroke="#555a63" stroke-width="1.1"/><circle cx="8.5" cy="8.5" r="2.5" fill="#eef3fa" stroke="#555a63" stroke-width="1"/></svg>
<svg style="position:absolute;left:1.0px;top:275.44px" width="12" height="12" viewBox="0 0 12 12"><path d="M2.5 1.5 L4.5 4 L2.5 6.5 L4.5 9 L2.5 11.5 M7 1.5 L9 4 L7 6.5 L9 9 L7 11.5" fill="none" stroke="#3d6fe0" stroke-width="1.5" stroke-dasharray="1.6 0.8"/></svg>
<svg style="position:absolute;left:1.0px;top:291.12px" width="12" height="12" viewBox="0 0 12 12"><rect x="2" y="2" width="8" height="8" fill="#8fb0ef"/><rect x="2" y="2" width="8" height="8" fill="none" stroke="#555a63" stroke-width="0.9"/><path d="M0.5 2 H11.5 M0.5 10 H11.5 M2 0.5 V11.5 M10 0.5 V11.5" stroke="#555a63" stroke-width="0.8"/></svg>
<svg style="position:absolute;left:1.0px;top:306.79999999999995px" width="12" height="12" viewBox="0 0 12 12"><rect x="2" y="2" width="8" height="8" fill="#555a63"/></svg>
<svg style="position:absolute;left:1.0px;top:322.48px" width="12" height="12" viewBox="0 0 12 12"><rect x="1" y="4" width="6.5" height="6.5" fill="none" stroke="#a9aeb5" stroke-width="1"/><rect x="4.5" y="1.5" width="6.5" height="6.5" fill="#eef3fa" stroke="#a9aeb5" stroke-width="1"/></svg>
<svg style="position:absolute;left:1.0px;top:338.15999999999997px" width="12" height="12" viewBox="0 0 12 12"><path d="M1.5 2.5 H7 L10.5 6 V10 H1.5 Z" fill="#555a63"/><circle cx="7.5" cy="8.5" r="2" fill="#eef3fa"/></svg>
<svg style="position:absolute;left:1.0px;top:353.84000000000003px" width="12" height="12" viewBox="0 0 12 12"><rect x="1" y="2" width="10" height="1.6" fill="#3d6fe0"/><rect x="1" y="4.5" width="10" height="6" fill="#555a63"/><path d="M1 6.5 H11 M1 8.5 H11 M4.3 4.5 V10.5 M7.6 4.5 V10.5" stroke="#eef3fa" stroke-width="0.6"/></svg>
<svg style="position:absolute;left:1.0px;top:369.52px" width="12" height="12" viewBox="0 0 12 12"><path d="M1.5 11 L6 1 L10.5 11 M3.2 7.3 H8.8" fill="none" stroke="#555a63" stroke-width="1.1"/></svg>
<svg style="position:absolute;left:1.0px;top:385.20000000000005px" width="12" height="12" viewBox="0 0 12 12"><circle cx="2.5" cy="2.5" r="1.5" fill="#555a63"/><path d="M4.5 2.5 H8.5 V8" fill="none" stroke="#3d6fe0" stroke-width="1"/><circle cx="8.5" cy="10" r="1.5" fill="#555a63"/></svg>
<div style="position:absolute;left:20px;top:83px;width:1026px;height:417px;background:#1f2532"></div>
<svg style="position:absolute;left:20px;top:83px" width="1026" height="417" viewBox="0 0 1026 417"><rect x="4" y="0" width="1" height="417" fill="#262f3a"/><rect x="30" y="0" width="1" height="417" fill="#262f3a"/><rect x="54" y="0" width="1" height="417" fill="#262f3a"/><rect x="80" y="0" width="1" height="417" fill="#262f3a"/><rect x="107" y="0" width="1" height="417" fill="#262f3a"/><rect x="134" y="0" width="1" height="417" fill="#262f3a"/><rect x="159" y="0" width="1" height="417" fill="#262f3a"/><rect x="184" y="0" width="1" height="417" fill="#262f3a"/><rect x="209" y="0" width="1" height="417" fill="#262f3a"/><rect x="234" y="0" width="1" height="417" fill="#262f3a"/><rect x="260" y="0" width="1" height="417" fill="#262f3a"/><rect x="287" y="0" width="1" height="417" fill="#262f3a"/><rect x="313" y="0" width="1" height="417" fill="#262f3a"/><rect x="339" y="0" width="1" height="417" fill="#262f3a"/><rect x="363" y="0" width="1" height="417" fill="#262f3a"/><rect x="389" y="0" width="1" height="417" fill="#262f3a"/><rect x="416" y="0" width="1" height="417" fill="#262f3a"/><rect x="442" y="0" width="1" height="417" fill="#262f3a"/><rect x="467" y="0" width="1" height="417" fill="#262f3a"/><rect x="493" y="0" width="1" height="417" fill="#262f3a"/><rect x="520" y="0" width="1" height="417" fill="#262f3a"/><rect x="544" y="0" width="1" height="417" fill="#262f3a"/><rect x="570" y="0" width="1" height="417" fill="#262f3a"/><rect x="596" y="0" width="1" height="417" fill="#262f3a"/><rect x="621" y="0" width="1" height="417" fill="#262f3a"/><rect x="645" y="0" width="1" height="417" fill="#262f3a"/><rect x="673" y="0" width="1" height="417" fill="#262f3a"/><rect x="700" y="0" width="1" height="417" fill="#262f3a"/><rect x="724" y="0" width="1" height="417" fill="#262f3a"/><rect x="751" y="0" width="1" height="417" fill="#262f3a"/><rect x="777" y="0" width="1" height="417" fill="#262f3a"/><rect x="804" y="0" width="1" height="417" fill="#262f3a"/><rect x="828" y="0" width="1" height="417" fill="#262f3a"/><rect x="854" y="0" width="1" height="417" fill="#262f3a"/><rect x="880" y="0" width="1" height="417" fill="#262f3a"/><rect x="907" y="0" width="1" height="417" fill="#262f3a"/><rect x="932" y="0" width="1" height="417" fill="#262f3a"/><rect x="958" y="0" width="1" height="417" fill="#262f3a"/><rect x="983" y="0" width="1" height="417" fill="#262f3a"/><rect x="1007" y="0" width="1" height="417" fill="#262f3a"/><rect x="0" y="18" width="1026" height="1" fill="#262f3a"/><rect x="0" y="44" width="1026" height="1" fill="#262f3a"/><rect x="0" y="71" width="1026" height="1" fill="#262f3a"/><rect x="0" y="97" width="1026" height="1" fill="#262f3a"/><rect x="0" y="122" width="1026" height="1" fill="#262f3a"/><rect x="0" y="148" width="1026" height="1" fill="#262f3a"/><rect x="0" y="174" width="1026" height="1" fill="#262f3a"/><rect x="0" y="200" width="1026" height="1" fill="#262f3a"/><rect x="0" y="225" width="1026" height="1" fill="#262f3a"/><rect x="0" y="251" width="1026" height="1" fill="#262f3a"/><rect x="0" y="278" width="1026" height="1" fill="#262f3a"/><rect x="0" y="302" width="1026" height="1" fill="#262f3a"/><rect x="0" y="328" width="1026" height="1" fill="#262f3a"/><rect x="0" y="354" width="1026" height="1" fill="#262f3a"/><rect x="0" y="381" width="1026" height="1" fill="#262f3a"/><rect x="0" y="406" width="1026" height="1" fill="#262f3a"/></svg>
<div style="position:absolute;left:357px;top:138px;width:259px;height:259px;border:1px solid #d6d6d6"></div>
<svg style="position:absolute;left:25px;top:420px" width="80" height="75" viewBox="0 0 80 75"><line x1="10.5" y1="23" x2="10.5" y2="65" stroke="#c9c9c9" stroke-width="1"/><line x1="10.5" y1="65.5" x2="53" y2="65.5" stroke="#c9c9c9" stroke-width="1"/><rect x="7.5" y="62" width="7" height="7" fill="none" stroke="#c9c9c9" stroke-width="1"/><path d="M10.5 8 L15.5 13 L20.5 8 M15.5 13 V18" fill="none" stroke="#c9c9c9" stroke-width="1"/><path d="M58.5 56.5 L68.5 66 M68.5 56.5 L58.5 66" fill="none" stroke="#c9c9c9" stroke-width="1"/></svg>
<svg style="position:absolute;left:370px;top:445px" width="70" height="55" viewBox="0 0 70 55"><line x1="35.5" y1="8" x2="35.5" y2="55" stroke="#d0d0d0" stroke-width="1"/><line x1="8" y1="35.5" x2="63" y2="35.5" stroke="#d0d0d0" stroke-width="1"/><rect x="33" y="33" width="5" height="5" fill="none" stroke="#d0d0d0" stroke-width="1"/></svg>
<div style="position:absolute;left:1046px;top:83px;width:15px;height:418px;background:#f0efed"></div>
<div style="position:absolute;left:1047px;top:297px;width:11px;height:11px;background:#d3d3d3"></div>
<svg style="position:absolute;left:1047px;top:86px" width="12" height="10" viewBox="0 0 12 10"><path d="M2.5 6.5 L6 3 L9.5 6.5" fill="none" stroke="#555" stroke-width="1.2"/></svg>
<svg style="position:absolute;left:1047px;top:489px" width="12" height="10" viewBox="0 0 12 10"><path d="M2.5 3.5 L6 7 L9.5 3.5" fill="none" stroke="#555" stroke-width="1.2"/></svg>
<div style="position:absolute;left:1061px;top:64px;width:16px;height:454px;background:#dce6f1"></div>
<div style="position:absolute;left:1062px;top:64px;width:15px;height:380px;background:#f5f7fb"></div>
<div style="position:absolute;left:1061px;top:64px;width:1px;height:454px;background:#c9d3df"></div>
<div style="position:absolute;left:1062px;top:65px;width:15px;height:5px;background:#b5c3d1"></div>
<svg style="position:absolute;left:1063.5px;top:71.5px" width="12" height="12" viewBox="0 0 12 12"><path d="M1.5 8 L7.5 2 L11 5.5 L5 11.5 Z" fill="#3d6fe0"/><path d="M1.5 8 L5 11.5 L3.5 12 L1 9.5 Z" fill="#e0463a"/><path d="M1.5 8 L3.7 10.2 L5 11.5" fill="#e0463a"/></svg>
<svg style="position:absolute;left:1063.5px;top:87.18px" width="12" height="12" viewBox="0 0 12 12"><circle cx="2.5" cy="3" r="1.8" fill="#555a63"/><path d="M4.3 3 H8 V6" fill="none" stroke="#555a63" stroke-width="1"/><ellipse cx="8.5" cy="9" rx="3" ry="2.2" fill="#3d6fe0"/></svg>
<svg style="position:absolute;left:1063.5px;top:102.86px" width="12" height="12" viewBox="0 0 12 12"><path d="M5.5 1 L5.5 11 H1 Z" fill="#555a63"/><path d="M6.5 1 L11 11 H6.5 Z" fill="#3d6fe0"/><path d="M6 0 V12" stroke="#eef3fa" stroke-width="0.6" stroke-dasharray="1 1"/></svg>
<svg style="position:absolute;left:1063.5px;top:118.53999999999999px" width="12" height="12" viewBox="0 0 12 12"><path d="M1 5.5 H3.5 V1.5 H8 V3.5 H10 V5.5 H11 V10.5 H1 Z" fill="#fff" stroke="#555a63" stroke-width="1"/><rect x="1.5" y="7" width="9" height="3" fill="#b9c9ea"/><path d="M1.5 7 H10.5" stroke="#555a63" stroke-width="0.8"/></svg>
<svg style="position:absolute;left:1063.5px;top:134.22px" width="12" height="12" viewBox="0 0 12 12"><rect x="1.5" y="1.5" width="3.8" height="3.8" fill="#3d6fe0"/><rect x="6.7" y="1.5" width="3.8" height="3.8" fill="#555a63"/><rect x="1.5" y="6.7" width="3.8" height="3.8" fill="#555a63"/><rect x="6.7" y="6.7" width="3.8" height="3.8" fill="#555a63"/></svg>
<svg style="position:absolute;left:1063.5px;top:149.9px" width="12" height="12" viewBox="0 0 12 12"><path d="M6 0.5 V11.5 M0.5 6 H11.5" stroke="#3d6fe0" stroke-width="1.2"/><path d="M6 0 L4.3 2 H7.7 Z M6 12 L4.3 10 H7.7 Z M0 6 L2 4.3 V7.7 Z M12 6 L10 4.3 V7.7 Z" fill="#3d6fe0"/><circle cx="6" cy="6" r="1.6" fill="#fff" stroke="#3d6fe0" stroke-width="0.8"/></svg>
<svg style="position:absolute;left:1063.5px;top:165.57999999999998px" width="12" height="12" viewBox="0 0 12 12"><path d="M8.5 2 A4.8 4.8 0 1 0 10.6 5" fill="none" stroke="#8a8f96" stroke-width="1.1"/><path d="M6.5 0.3 L10.2 1.6 L7.6 4 Z" fill="#4a7be0"/></svg>
<svg style="position:absolute;left:1063.5px;top:181.26px" width="12" height="12" viewBox="0 0 12 12"><rect x="1" y="1" width="10" height="10" fill="none" stroke="#555a63" stroke-width="0.8" stroke-dasharray="1 1"/><rect x="1" y="5" width="6" height="6" fill="#555a63"/></svg>
<svg style="position:absolute;left:1063.5px;top:196.94px" width="12" height="12" viewBox="0 0 12 12"><rect x="1" y="1.5" width="8" height="9" fill="#555a63"/><path d="M3 6 H8 M6 4 L8 6 L6 8" fill="none" stroke="#eef3fa" stroke-width="1.1"/><path d="M8 4 L11 11 H6 Z" fill="#3d6fe0"/></svg>
<svg style="position:absolute;left:1063.5px;top:212.62px" width="12" height="12" viewBox="0 0 12 12"><path d="M0.5 7 H4.5" stroke="#3d6fe0" stroke-width="1" stroke-dasharray="1 0.6"/><path d="M7.5 7 H11.5" stroke="#c08a5a" stroke-width="1"/><path d="M3 11 L8 1" stroke="#555a63" stroke-width="1"/></svg>
<svg style="position:absolute;left:1063.5px;top:228.3px" width="12" height="12" viewBox="0 0 12 12"><path d="M0.5 6.5 H6" stroke="#3d6fe0" stroke-width="1" stroke-dasharray="1 0.7"/><path d="M4.5 11 L9.5 1" stroke="#555a63" stroke-width="1.1"/></svg>
<svg style="position:absolute;left:1063.5px;top:243.98px" width="12" height="12" viewBox="0 0 12 12"><rect x="1" y="3" width="10" height="7.5" fill="none" stroke="#555a63" stroke-width="1"/><circle cx="6" cy="3" r="1.3" fill="#3d6fe0"/></svg>
<svg style="position:absolute;left:1063.5px;top:259.65999999999997px" width="12" height="12" viewBox="0 0 12 12"><rect x="1" y="3" width="10" height="7.5" fill="none" stroke="#555a63" stroke-width="1"/><circle cx="3.5" cy="3" r="1.3" fill="#3d6fe0"/><circle cx="8.5" cy="3" r="1.3" fill="#3d6fe0"/></svg>
<svg style="position:absolute;left:1063.5px;top:275.34000000000003px" width="12" height="12" viewBox="0 0 12 12"><path d="M0.5 6 H4.5 M7.5 6 H11.5" stroke="#555a63" stroke-width="1"/><circle cx="4.5" cy="6" r="1" fill="#555a63"/><circle cx="7.5" cy="6" r="1" fill="#555a63"/><path d="M3 4.5 V7.5 M9 4.5 V7.5" stroke="#555a63" stroke-width="0.8"/></svg>
<svg style="position:absolute;left:1063.5px;top:291.02px" width="12" height="12" viewBox="0 0 12 12"><path d="M2 11 L11 2 V11 Z" fill="#555a63"/><path d="M1 7.5 L6.5 2" stroke="#3d6fe0" stroke-width="1.1"/></svg>
<svg style="position:absolute;left:1063.5px;top:306.7px" width="12" height="12" viewBox="0 0 12 12"><path d="M2 11 A9 9 0 0 1 11 2 V11 Z" fill="#555a63"/><path d="M0.8 8 A7 7 0 0 1 7.5 1" fill="none" stroke="#5a8be8" stroke-width="1.1"/></svg>
<svg style="position:absolute;left:1063.5px;top:322.38px" width="12" height="12" viewBox="0 0 12 12"><path d="M1 3.5 H8.5 V11 H1 Z" fill="#555a63"/><path d="M1 3.5 L3.5 1 H11 V8.5 L8.5 11" fill="none" stroke="#555a63" stroke-width="1"/></svg>
<div style="position:absolute;left:1062px;top:336px;width:15px;height:5px;background:#b9c6d4"></div>
<svg style="position:absolute;left:1063.5px;top:345.9px" width="12" height="12" viewBox="0 0 12 12"><rect x="1" y="1" width="7" height="7" fill="#3d6fe0"/><rect x="4" y="4" width="7" height="7" fill="#555a63"/><rect x="4" y="4" width="4" height="4" fill="#2350c0"/></svg>
<svg style="position:absolute;left:1063.5px;top:361.5px" width="12" height="12" viewBox="0 0 12 12"><rect x="1" y="1" width="7" height="7" fill="#555a63"/><rect x="4" y="4" width="7" height="7" fill="#555a63"/><rect x="4" y="4" width="4" height="4" fill="#3d6fe0"/></svg>
<svg style="position:absolute;left:1063.5px;top:377.09999999999997px" width="12" height="12" viewBox="0 0 12 12"><rect x="4" y="4" width="7" height="7" fill="#555a63"/><rect x="1" y="1" width="7" height="7" fill="#3d6fe0"/></svg>
<svg style="position:absolute;left:1063.5px;top:392.7px" width="12" height="12" viewBox="0 0 12 12"><rect x="1" y="1" width="7" height="7" fill="#3d6fe0"/><rect x="4" y="4" width="7" height="7" fill="#555a63"/></svg>
<div style="position:absolute;left:1063px;top:409px;width:13px;height:1px;background:#c3ccd6"></div>
<svg style="position:absolute;left:1063.5px;top:413.4px" width="12" height="12" viewBox="0 0 12 12"><path d="M1 3 H11" stroke="#3d6fe0" stroke-width="1" stroke-dasharray="1 0.6"/><rect x="2" y="4" width="9" height="7" fill="#555a63"/><path d="M2 4 H6" stroke="#3d6fe0" stroke-width="1.5"/></svg>
<svg style="position:absolute;left:1063.5px;top:429.0px" width="12" height="12" viewBox="0 0 12 12"><rect x="1" y="1" width="9" height="7" fill="#555a63"/><path d="M2 10.5 H11" stroke="#3d6fe0" stroke-width="1" stroke-dasharray="1 0.6"/><path d="M6 8 H11" stroke="#3d6fe0" stroke-width="1.5"/></svg>
<div style="position:absolute;left:18px;top:500px;width:1044px;height:2px;background:#e4e4e4"></div>
<div style="position:absolute;left:18px;top:502px;width:1044px;height:14px;background:#f0f0f0"></div>
<div style="position:absolute;left:18px;top:500px;width:1px;height:16px;background:#a8a8a8"></div>
<div style="position:absolute;left:18px;top:515px;width:1044px;height:1px;background:#c8c8c8"></div>
<div style="position:absolute;left:18px;top:516px;width:1044px;height:2px;background:#dde6f0"></div>
<svg style="position:absolute;left:18px;top:504px" width="50" height="10" viewBox="0 0 50 10"><path d="M3.5 1.5 V8.5" stroke="#555" stroke-width="1.2"/><path d="M9 1.5 L4.5 5 L9 8.5 Z" fill="#444"/><path d="M19 1.5 L14.5 5 L19 8.5 Z" fill="#444"/><path d="M27 1.5 L31.5 5 L27 8.5 Z" fill="#444"/><path d="M38 1.5 L42.5 5 L38 8.5 Z" fill="#444"/><path d="M43.5 1.5 V8.5" stroke="#555" stroke-width="1.2"/></svg>
<svg style="position:absolute;left:60px;top:501px" width="112" height="14" viewBox="0 0 112 14"><path d="M94.5 1.5 L92 7 L95 12 H117.5 L121.8 1.5" fill="#f5f5f5" stroke="#6e6e6e" stroke-width="0.8" transform="translate(-60,0)"/><path d="M121.8 1.5 L119.5 7 L123 12 H147.5 L152 1.5" fill="#f5f5f5" stroke="#6e6e6e" stroke-width="0.8" transform="translate(-60,0)"/><path d="M152 1.5 L149.5 7 L153 12 H162 L166.5 1.5" fill="#f5f5f5" stroke="#6e6e6e" stroke-width="0.8" transform="translate(-60,0)"/><path d="M66 1.5 H94.8 L91 12.3 H71 Z" fill="#1f242b" transform="translate(-60,0)"/></svg>
<div style="position:absolute;left:72.5px;top:502px;white-space:nowrap;font-size:7.6px;line-height:12px;color:#f4f4f4">模型</div>
<div style="position:absolute;left:96.2px;top:502px;white-space:nowrap;font-size:7.6px;line-height:12px;color:#505050">布局1</div>
<div style="position:absolute;left:125.2px;top:502px;white-space:nowrap;font-size:7.6px;line-height:12px;color:#505050">布局2</div>
<div style="position:absolute;left:155px;top:502px;white-space:nowrap;font-size:6.5px;line-height:12px;color:#999">+</div>
<div style="position:absolute;left:546px;top:503px;width:3px;height:10px;background:#fff;border:1px solid #999"></div>
<svg style="position:absolute;left:552px;top:504px" width="6" height="8" viewBox="0 0 6 8"><path d="M4.5 1.5 L1.5 4 L4.5 6.5" fill="none" stroke="#444" stroke-width="1.3"/></svg>
<div style="position:absolute;left:875px;top:504px;width:11px;height:9px;background:#d6d6d6"></div>
<svg style="position:absolute;left:1037px;top:504px" width="6" height="8" viewBox="0 0 6 8"><path d="M1.5 1.5 L4.5 4 L1.5 6.5" fill="none" stroke="#444" stroke-width="1.3"/></svg>
<div style="position:absolute;left:0px;top:518px;width:1077px;height:2px;background:#fafafa"></div>
<div style="position:absolute;left:0px;top:520px;width:1077px;height:1px;background:#8f8f8f"></div>
<div style="position:absolute;left:0px;top:521px;width:15px;height:41px;background:#d9e3ef"></div>
<div style="position:absolute;left:15px;top:521px;width:1px;height:41px;background:#a8a8a8"></div>
<div style="position:absolute;left:16px;top:521px;width:1061px;height:27px;background:#fdfdfd"></div>
<div style="position:absolute;left:16px;top:548px;width:1061px;height:1px;background:#9a9a9a"></div>
<div style="position:absolute;left:16px;top:549px;width:1061px;height:12px;background:#fdfdfd"></div>
<div style="position:absolute;left:2px;top:523px;width:8px;height:7px;background:#d9544a"></div>
<svg style="position:absolute;left:2px;top:523px" width="8" height="7" viewBox="0 0 8 7"><path d="M2.7 2.2 L5.3 4.8 M5.3 2.2 L2.7 4.8" stroke="#fff" stroke-width="0.9"/></svg>
<svg style="position:absolute;left:2px;top:533px" width="8" height="8" viewBox="0 0 8 8"><path d="M2 1 H6 V4 H7 V5 H1 V4 H2 Z M4 5 V8" fill="#333" stroke="#333" stroke-width="0.6"/></svg>
<div style="position:absolute;left:15.5px;top:523px;white-space:nowrap;font-family:'Liberation Mono',monospace;font-size:8.6px;line-height:12px;color:#4a4a4a"><span class="c" style="width:40.96px;letter-spacing:0">输入选项</span><span class="c" style="width:5.12px;text-align:left">[</span><span class="c" style="width:20.48px;letter-spacing:0">距离</span><span class="c" style="width:20.48px;text-align:left">(D)/</span><span class="c" style="width:20.48px;letter-spacing:0">半径</span><span class="c" style="width:20.48px;text-align:left">(R)/</span><span class="c" style="width:20.48px;letter-spacing:0">角度</span><span class="c" style="width:20.48px;text-align:left">(A)/</span><span class="c" style="width:20.48px;letter-spacing:0">面积</span><span class="c" style="width:25.60px;text-align:left">(AR)/</span><span class="c" style="width:20.48px;letter-spacing:0">体积</span><span class="c" style="width:20.48px;text-align:left">(V)/</span><span class="c" style="width:30.72px;letter-spacing:0">总面积</span><span class="c" style="width:20.48px;text-align:left">(S)/</span><span class="c" style="width:30.72px;letter-spacing:0">总长度</span><span class="c" style="width:20.48px;text-align:left">(T)/</span><span class="c" style="width:20.48px;letter-spacing:0">退出</span><span class="c" style="width:30.72px;text-align:left">(X)]&nbsp;&lt;</span><span class="c" style="width:20.48px;letter-spacing:0">面积</span><span class="c" style="width:20.48px;text-align:left">&gt;&nbsp;:*</span><span class="c" style="width:20.48px;letter-spacing:0">取消</span><span class="c" style="width:5.12px;text-align:left">*</span></div>
<div style="position:absolute;left:15.5px;top:536px;white-space:nowrap;font-family:'Liberation Mono',monospace;font-size:8.6px;line-height:12px;color:#4a4a4a"><span class="c" style="width:20.48px;letter-spacing:0">命令</span><span class="c" style="width:10.24px;text-align:left">:*</span><span class="c" style="width:20.48px;letter-spacing:0">取消</span><span class="c" style="width:5.12px;text-align:left">*</span></div>
<div style="position:absolute;left:15.5px;top:549px;white-space:nowrap;font-family:'Liberation Mono',monospace;font-size:8.6px;line-height:12px;color:#4a4a4a"><span class="c" style="width:20.48px;letter-spacing:0">命令</span><span class="c" style="width:5.12px;text-align:left">:</span></div>
<div style="position:absolute;left:43px;top:550px;width:1px;height:10px;background:#222"></div>
<svg style="position:absolute;left:245px;top:548px" width="7" height="12" viewBox="0 0 7 12"><path d="M1 0.5 H6 M3.5 0.5 V11.5 M1 11.5 H6" stroke="#666" stroke-width="0.9"/></svg>
<div style="position:absolute;left:1066px;top:521px;width:11px;height:27px;background:#f0f0f0"></div>
<svg style="position:absolute;left:1066px;top:523px" width="11" height="7" viewBox="0 0 11 7"><path d="M2.5 5 L5.5 2 L8.5 5" fill="none" stroke="#555" stroke-width="1"/></svg>
<svg style="position:absolute;left:1066px;top:539px" width="11" height="7" viewBox="0 0 11 7"><path d="M2.5 2 L5.5 5 L8.5 2" fill="none" stroke="#555" stroke-width="1"/></svg>
<div style="position:absolute;left:1009px;top:550px;width:56px;height:11px;background:#f0f0f0"></div>
<div style="position:absolute;left:1021px;top:550px;width:11.5px;height:11px;background:#d6d6d6"></div>
<svg style="position:absolute;left:1012px;top:551px" width="8" height="9" viewBox="0 0 8 9"><path d="M5 1.5 L2.5 4.5 L5 7.5" fill="none" stroke="#555" stroke-width="1"/></svg>
<svg style="position:absolute;left:1056px;top:551px" width="8" height="9" viewBox="0 0 8 9"><path d="M3 1.5 L5.5 4.5 L3 7.5" fill="none" stroke="#555" stroke-width="1"/></svg>
<div style="position:absolute;left:0px;top:561px;width:1077px;height:17px;background:#f0f0f0"></div>
<div style="position:absolute;left:1.5px;top:562.8px;white-space:nowrap;font-size:8.5px;letter-spacing:-0.32px;line-height:16px;color:#555">1667.9561, 1623.6765, 0</div>
<div style="position:absolute;left:147.4px;top:562px;white-space:nowrap;width:14.599999999999994px;text-align:center;font-size:8px;line-height:16px;color:#3a3a3a">捕捉</div>
<div style="position:absolute;left:165px;top:563.5px;width:18px;height:13.5px;background:#fde9a6;border:1px solid #f5cf7e;border-radius:1px"></div>
<div style="position:absolute;left:165px;top:562px;white-space:nowrap;width:18px;text-align:center;font-size:8px;line-height:16px;color:#3a3a3a">栅格</div>
<div style="position:absolute;left:186px;top:562px;white-space:nowrap;width:16px;text-align:center;font-size:8px;line-height:16px;color:#3a3a3a">正交</div>
<div style="position:absolute;left:203px;top:563.5px;width:18.599999999999994px;height:13.5px;background:#fde9a6;border:1px solid #f5cf7e;border-radius:1px"></div>
<div style="position:absolute;left:203px;top:562px;white-space:nowrap;width:18.599999999999994px;text-align:center;font-size:8px;line-height:16px;color:#3a3a3a">极轴</div>
<div style="position:absolute;left:222.6px;top:563.5px;width:33.400000000000006px;height:13.5px;background:#fde9a6;border:1px solid #f5cf7e;border-radius:1px"></div>
<div style="position:absolute;left:222.6px;top:562px;white-space:nowrap;width:33.400000000000006px;text-align:center;font-size:8px;line-height:16px;color:#3a3a3a">对象捕捉</div>
<div style="position:absolute;left:257.5px;top:563.5px;width:32.5px;height:13.5px;background:#fde9a6;border:1px solid #f5cf7e;border-radius:1px"></div>
<div style="position:absolute;left:257.5px;top:562px;white-space:nowrap;width:32.5px;text-align:center;font-size:8px;line-height:16px;color:#3a3a3a">对象追踪</div>
<div style="position:absolute;left:293px;top:562px;white-space:nowrap;width:16px;text-align:center;font-size:8px;line-height:16px;color:#3a3a3a">线宽</div>
<div style="position:absolute;left:311px;top:563.5px;width:34px;height:13.5px;background:#fde9a6;border:1px solid #f5cf7e;border-radius:1px"></div>
<div style="position:absolute;left:311px;top:562px;white-space:nowrap;width:34px;text-align:center;font-size:8px;line-height:16px;color:#3a3a3a">动态输入</div>
<div style="position:absolute;left:347.4px;top:562px;white-space:nowrap;width:30.600000000000023px;text-align:center;font-size:8px;line-height:16px;color:#3a3a3a">对称画线</div>
<div style="position:absolute;left:382px;top:562px;white-space:nowrap;width:39.60000000000002px;text-align:center;font-size:8px;line-height:16px;color:#3a3a3a">拾取对称轴</div>
<div style="position:absolute;left:425px;top:562px;white-space:nowrap;width:31px;text-align:center;font-size:8px;line-height:16px;color:#3a3a3a">自动图层</div>
<div style="position:absolute;left:460px;top:562px;white-space:nowrap;width:23px;text-align:center;font-size:8px;line-height:16px;color:#3a3a3a">放大镜</div>
<div style="position:absolute;left:485.6px;top:563.5px;width:17.399999999999977px;height:13.5px;background:#fde9a6;border:1px solid #f5cf7e;border-radius:1px"></div>
<div style="position:absolute;left:485.6px;top:562px;white-space:nowrap;width:17.399999999999977px;text-align:center;font-size:8px;line-height:16px;color:#3a3a3a">模型</div>
<div style="position:absolute;left:566px;top:563.5px;width:25px;height:13.5px;background:#fde9a6;border:1px solid #f5cf7e;border-radius:1px"></div>
<div style="position:absolute;left:566px;top:562px;white-space:nowrap;width:25px;text-align:center;font-size:8px;line-height:16px;color:#3a3a3a">透明度</div>
<div style="position:absolute;left:593.7px;top:562px;white-space:nowrap;width:30.299999999999955px;text-align:center;font-size:8px;line-height:16px;color:#3a3a3a">快捷特性</div>
<div style="position:absolute;left:627.6px;top:563.5px;width:32.89999999999998px;height:13.5px;background:#fde9a6;border:1px solid #f5cf7e;border-radius:1px"></div>
<div style="position:absolute;left:627.6px;top:562px;white-space:nowrap;width:32.89999999999998px;text-align:center;font-size:8px;line-height:16px;color:#3a3a3a">选择循环</div>
<svg style="position:absolute;left:506.0px;top:565.0px" width="11" height="11" viewBox="0 0 12 12"><path d="M6 1.5 V7 M6 7 L1.5 10.8 M6 7 L10.5 10.8" stroke="#3f434a" stroke-width="2"/><circle cx="6" cy="7" r="1.6" fill="#3f434a"/></svg>
<div style="position:absolute;left:518.5px;top:562.5px;white-space:nowrap;font-size:8.8px;line-height:16px;color:#7a7a7a">1:1</div>
<svg style="position:absolute;left:533px;top:568.3px" width="4" height="2.5" viewBox="0 0 4 2.5"><path d="M0 0 H4 L2 2.5 Z" fill="#444"/></svg>
<svg style="position:absolute;left:539.5px;top:565.0px" width="11" height="11" viewBox="0 0 12 12"><path d="M5 2.5 V7 M5 7 L1 10.8 M5 7 L9 10.8" stroke="#3f434a" stroke-width="1.9"/><circle cx="9.8" cy="2.3" r="1.6" fill="#f2a93b"/></svg>
<svg style="position:absolute;left:552.0px;top:565.0px" width="11" height="11" viewBox="0 0 12 12"><path d="M5 2.5 V7 M5 7 L1 10.8 M5 7 L9 10.8" stroke="#3f434a" stroke-width="1.9"/><circle cx="9.8" cy="2.3" r="1.4" fill="#3f434a"/></svg>
<svg style="position:absolute;left:970.0px;top:565.8px" width="10" height="10" viewBox="0 0 12 12"><circle cx="6" cy="6" r="3.2" fill="none" stroke="#3f434a" stroke-width="2.2"/><path d="M6 0.8 V3 M6 9 V11.2 M0.8 6 H3 M9 6 H11.2 M2.3 2.3 L3.8 3.8 M8.2 8.2 L9.7 9.7 M9.7 2.3 L8.2 3.8 M3.8 8.2 L2.3 9.7" stroke="#3f434a" stroke-width="1.6"/></svg>
<svg style="position:absolute;left:984.0px;top:565.3px" width="11" height="11" viewBox="0 0 12 12"><rect x="1" y="5.5" width="6.5" height="5" fill="#3d6fe0"/><path d="M6 5.5 V3.5 A2.2 2.2 0 0 1 10.4 3.5 V4.5" fill="none" stroke="#3d6fe0" stroke-width="1.2"/></svg>
<svg style="position:absolute;left:998.5px;top:565.3px" width="11" height="11" viewBox="0 0 12 12"><circle cx="6" cy="4.5" r="3.6" fill="#f2a93b"/><rect x="4.5" y="7.5" width="3" height="3" fill="#f2a93b"/></svg>
<svg style="position:absolute;left:1013.5px;top:565.3px" width="11" height="11" viewBox="0 0 12 12"><rect x="1" y="2" width="6.5" height="5.5" rx="1" fill="#3d6fe0"/><rect x="4.5" y="4" width="6" height="5" rx="1" fill="#8fa6c8"/><circle cx="8" cy="7" r="2" fill="none" stroke="#3f434a" stroke-width="0.9"/><path d="M9.5 8.5 L11 10.5" stroke="#3f434a" stroke-width="0.9"/></svg>
<svg style="position:absolute;left:1028.0px;top:565.3px" width="11" height="11" viewBox="0 0 12 12"><rect x="1.5" y="1.5" width="9" height="9" fill="none" stroke="#666" stroke-width="0.9"/><path d="M3.5 8.5 L8.5 3.5 M3.5 8.5 V6.5 M3.5 8.5 H5.5 M8.5 3.5 H6.5 M8.5 3.5 V5.5" fill="none" stroke="#666" stroke-width="0.8"/></svg>
<div style="position:absolute;left:1043px;top:562px;white-space:nowrap;font-size:7.8px;line-height:16px;color:#555">GstarCAD</div></body></html>
